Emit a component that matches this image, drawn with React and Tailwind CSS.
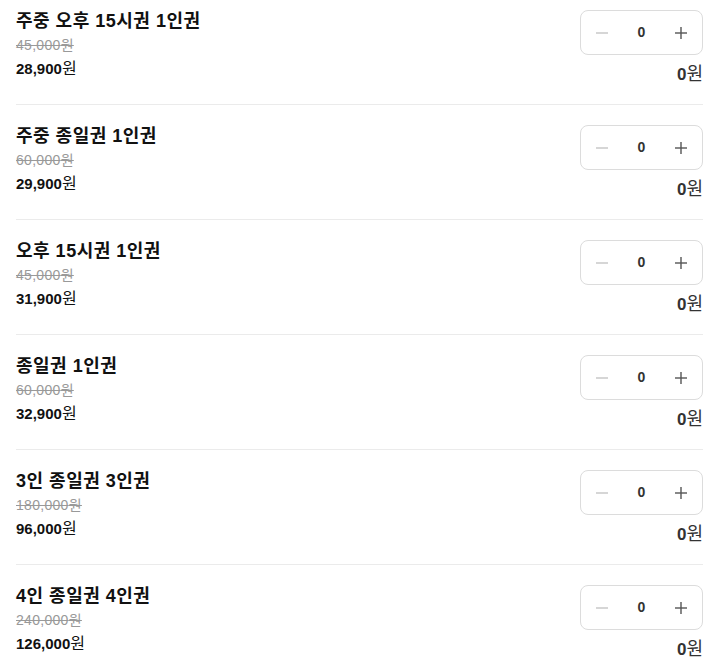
import React from "react";

const items = [
  { title: "주중 오후 15시권 1인권", orig: "45,000", price: "28,900" },
  { title: "주중 종일권 1인권", orig: "60,000", price: "29,900" },
  { title: "오후 15시권 1인권", orig: "45,000", price: "31,900" },
  { title: "종일권 1인권", orig: "60,000", price: "32,900" },
  { title: "3인 종일권 3인권", orig: "180,000", price: "96,000" },
  { title: "4인 종일권 4인권", orig: "240,000", price: "126,000" },
];

function Minus() {
  return (
    <svg width="14" height="14" viewBox="0 0 14 14">
      <line x1="1" y1="7" x2="13" y2="7" stroke="#c4c4c4" strokeWidth="1.4" />
    </svg>
  );
}
function Plus() {
  return (
    <svg width="14" height="14" viewBox="0 0 14 14">
      <line x1="1" y1="7" x2="13" y2="7" stroke="#555" strokeWidth="1.4" />
      <line x1="7" y1="1" x2="7" y2="13" stroke="#555" strokeWidth="1.4" />
    </svg>
  );
}

export default function App() {
  return (
    <div
      className="bg-white w-[707px] h-[663px] overflow-hidden"
      style={{ fontFamily: '"Liberation Sans", "Noto Sans CJK KR", sans-serif' }}
    >
      <div className="-mt-[10px] ml-[16px] mr-[4px]">
        {items.map((it, i) => (
          <div
            key={i}
            className="flex justify-between items-start border-b border-[#ebebeb] pt-[18px] pb-[25px] h-[115px]"
          >
            <div className="flex flex-col">
              <div className="text-[18px] leading-[24px] font-bold text-[#111] tracking-[0.5px] pt-[1px]">
                {it.title}
              </div>
              <div className="mt-[2px] text-[14px] leading-[20px] text-[#999] line-through tracking-[0.3px]">
                {it.orig}원
              </div>
              <div className="mt-[4px] text-[15px] leading-[20px] text-[#111]">
                <span className="font-bold">{it.price}</span>
                <span className="text-[16px]">원</span>
              </div>
            </div>
            <div className="flex flex-col items-end mt-[2px]">
              <div className="w-[123px] h-[45px] border border-[#dcdcdc] rounded-[8px] flex items-center justify-between px-[14px]">
                <Minus />
                <span className="text-[14px] font-bold text-[#333]">0</span>
                <Plus />
              </div>
              <div className="mt-[7px] text-[17px] leading-[24px] text-[#333]">
                <span className="font-bold">0</span>
                <span className="text-[18px]">원</span>
              </div>
            </div>
          </div>
        ))}
      </div>
    </div>
  );
}
